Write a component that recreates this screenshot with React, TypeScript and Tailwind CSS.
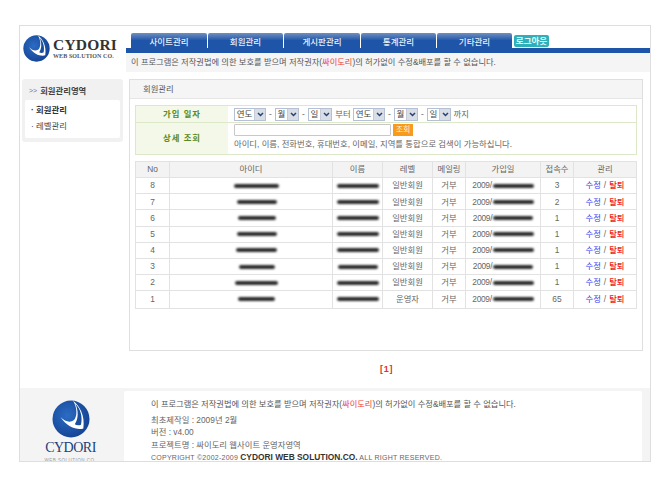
const F = '"Liberation Sans","Noto Sans CJK KR",sans-serif';

function Logo({ size, id }: { size: number; id: string }) {
  return (
    <svg width={size} height={size} viewBox="0 0 40 40" className="shrink-0">
      <defs>
        <radialGradient id={id} cx="0.4" cy="0.4" r="0.7">
          <stop offset="0" stopColor="#2b6cc4" />
          <stop offset="1" stopColor="#123f8e" />
        </radialGradient>
      </defs>
      <circle cx="20" cy="20" r="19.5" fill={`url(#${id})`} />
      <path d="M22 0.500 C29 6 35 16 33 30 C27 32 16 29 9 18 C14 23 20 25 24 20 C27 15 26 7 22 0.500Z" fill="#fff" />
      <path d="M24.500 4 C30 9 32.500 18 30.500 26 C28.500 27 26 27 24 25.500 C28 20 28 11 24.500 4Z" fill="#1a4f9e" />
    </svg>
  );
}

function Sel({ t, w }: { t: string; w: number }) {
  return (
    <span className="inline-flex h-[13px] shrink-0 items-stretch border border-[#b5c0d5] bg-white" style={{ width: w }}>
      <span className="flex-1 text-center text-[8.500px] leading-[11px] text-[#444]">{t}</span>
      <span className="flex w-[11px] items-center justify-center border-l border-[#c5cbd8] bg-[#d9dde6]">
        <svg width="7" height="5" viewBox="0 0 7 5"><path d="M1 1l2.500 2.500L6 1" fill="none" stroke="#27406e" strokeWidth="1.500" /></svg>
      </span>
    </span>
  );
}

const Dash = () => <span className="w-[4px] text-center text-[#666]">-</span>;

function Blur({ w, shift }: { w: number; shift?: boolean }) {
  return <span className={`inline-block h-[4px] rounded-full bg-[#2c2c2c] blur-[1px] ${shift ? 'ml-[11px]' : ''}`} style={{ width: w }} />;
}

const cols = ['w-[33px]', 'w-[163px]', 'w-[50px]', 'w-[50px]', 'w-[33px]', 'w-[75px]', 'w-[33px]', 'flex-1'];

const rows = [
  ['8', 45, 42, '일반회원', 41, '3'],
  ['7', 40, 42, '일반회원', 41, '2'],
  ['6', 38, 42, '일반회원', 40, '1'],
  ['5', 40, 42, '일반회원', 41, '1'],
  ['4', 41, 42, '일반회원', 41, '1'],
  ['3', 36, 40, '일반회원', 40, '1'],
  ['2', 43, 42, '일반회원', 41, '1'],
  ['1', 37, 42, '운영자', 41, '65'],
] as const;

function Cell({ i, children, head }: { i: number; children: React.ReactNode; head?: boolean }) {
  return (
    <div className={`${cols[i]} flex shrink-0 items-center justify-center ${i > 0 ? 'border-l border-[#e2e2e2]' : ''} ${head ? 'bg-[#f3f3f3]' : ''}`}>
      {children}
    </div>
  );
}

const tabs = [
  ['사이트관리', 'w-[76px]'],
  ['회원관리', 'w-[75px]'],
  ['게시판관리', 'w-[76px]'],
  ['통계관리', 'w-[75px]'],
  ['기타관리', 'w-[75px]'],
];

const Notice = () => (
  <span className="text-[8.250px]">이 프로그램은 저작권법에 의한 보호를 받으며 저작권자(<span className="text-[#f03a3a]">싸이도리</span>)의 허가없이 수정&amp;배포를 할 수 없습니다.</span>
);

export default function App() {
  return (
    <div className="h-[477px] w-[670px] overflow-hidden bg-white pl-[19px] pt-[25px] text-[8.350px] text-[#666]" style={{ fontFamily: F }}>
      <div className="flex h-[437px] w-[632px] flex-col overflow-hidden border border-[#dedede]">
        {/* header */}
        <div className="flex h-[47px] shrink-0">
          <div className="flex w-[106px] items-start pl-[3px] pt-[9px]">
            <Logo size={27} id="a" />
            <div className="ml-[3px] mt-[3px] flex flex-col" style={{ fontFamily: '"Liberation Serif",serif' }}>
              <span className="text-[15.500px] font-bold leading-[14px] tracking-[0.2px] text-[#333]">CYDORI</span>
              <span className="text-[6px] font-bold leading-[8px] tracking-[0.1px] text-[#555]">WEB SOLUTION CO.</span>
            </div>
          </div>
          <div className="flex-1">
            <div className="flex h-[22px] items-end pl-[5px] pt-[7px]">
              {tabs.map(([t, w]) => (
                <div key={t} className={`${w} mr-[1px] flex h-[15px] items-center justify-center rounded-t-[2px] bg-gradient-to-b from-[#6f8fc0] via-[#1f55a8] to-[#1f55a8] pt-[3px] text-[8.500px] font-medium text-[#e8f0fa]`}>{t}</div>
              ))}
              <div className="mb-[1px] ml-[1px] flex h-[12px] w-[35px] items-center justify-center rounded-[2px] bg-[#2eb0ba] text-[8.500px] font-bold text-[#e6fbfb]">로그아웃</div>
            </div>
            <div className="h-[5px] bg-[#1f55a8]" />
            <div className="flex h-[19px] items-center bg-[#f5f5f5] pl-[5px] pt-[2px] text-[#555]"><Notice /></div>
          </div>
        </div>
        {/* body */}
        <div className="flex flex-1 pl-[2px] pt-[6px]">
          <div className="h-[63px] w-[101px] shrink-0 rounded-[3px] bg-[#f1f1f1] p-[3px] pt-[3px]">
            <div className="flex h-[18px] items-center pl-[4px] font-bold text-[#444]">
              <span className="mr-[3px] text-[7px] font-normal text-[#777]">&gt;&gt;</span>회원관리영역
            </div>
            <div className="h-[38px] rounded-[2px] bg-white pl-[6px] pt-[2px]">
              <div className="h-[16px] leading-[16px] font-bold text-[#333]">· 회원관리</div>
              <div className="h-[16px] leading-[16px] text-[#444]">· 레벨관리</div>
            </div>
          </div>
          <div className="ml-[6px] h-[272px] w-[514px] shrink-0 border border-[#dfdfdf]">
            <div className="flex h-[19px] items-center border-b border-[#e6e6e6] bg-[#f5f5f5] pl-[13px] text-[#555]">회원관리</div>
            <div className="px-[5px] pt-[6px]">
              <div className="h-[50px] border border-[#dde8c8]">
                <div className="flex h-[17px] border-b border-[#dde8c8]">
                  <div className="flex w-[92px] items-center justify-center bg-[#f3f8e8] font-bold tracking-[1px] text-[#5a8a20]">가입 일자</div>
                  <div className="flex flex-1 items-center gap-[2.500px] pl-[6px]">
                    <Sel t="연도" w={32} /><Dash /><Sel t="월" w={24} /><Dash /><Sel t="일" w={24} />
                    <span className="mr-[-1px] w-[17px] text-center">부터</span>
                    <Sel t="연도" w={32} /><Dash /><Sel t="월" w={24} /><Dash /><Sel t="일" w={24} />
                    <span>까지</span>
                  </div>
                </div>
                <div className="flex h-[31px]">
                  <div className="flex w-[92px] items-center justify-center bg-[#f3f8e8] font-bold tracking-[1px] text-[#5a8a20]">상세 조회</div>
                  <div className="flex-1 pl-[6px] pt-[1px]">
                    <div className="flex items-center">
                      <div className="h-[12px] w-[157px] rounded-[1px] border border-[#c8c8c8] bg-white" />
                      <div className="ml-[2px] flex h-[12px] w-[20px] items-center justify-center bg-[#f89a1c] text-[8px] text-[#fff3da]">조회</div>
                    </div>
                    <div className="mt-[2px] h-[13px] leading-[13px]">아이디, 이름, 전화번호, 휴대번호, 이메일, 지역를 통합으로 검색이 가능하십니다.</div>
                  </div>
                </div>
              </div>
              <div className="mt-[6px] border border-[#e2e2e2]">
                <div className="flex h-[16px] border-b border-[#e2e2e2]">
                  {['No', '아이디', '이름', '레벨', '메일링', '가입일', '접속수', '관리'].map((h, i) => (
                    <Cell key={h} i={i} head>{h}</Cell>
                  ))}
                </div>
                {rows.map((r, idx) => (
                  <div key={r[0]} className={`flex h-[16.200px] ${idx < rows.length - 1 ? 'border-b border-[#e2e2e2]' : ''}`}>
                    <Cell i={0}>{r[0]}</Cell>
                    <Cell i={1}><Blur w={r[1]} shift /></Cell>
                    <Cell i={2}><Blur w={r[2]} /></Cell>
                    <Cell i={3}>{r[3]}</Cell>
                    <Cell i={4}>거부</Cell>
                    <Cell i={5}><span className="mr-[1px] tracking-[-0.3px]">2009/</span><Blur w={r[4]} /></Cell>
                    <Cell i={6}>{r[5]}</Cell>
                    <Cell i={7}><span className="text-[#3a3af0]">수정</span><span className="mx-[3px]">/</span><span className="font-medium text-[#f02020]">탈퇴</span></Cell>
                  </div>
                ))}
              </div>
            </div>
          </div>
        </div>
        {/* pager */}
        <div className="flex h-[37px] shrink-0 items-center pl-[360px] text-[9px] font-bold tracking-[0.8px] text-[#e03030]">[1]</div>
        {/* footer */}
        <div className="flex h-[73px] shrink-0 bg-[#f4f4f4] pt-[3px]">
          <div className="flex w-[104px] shrink-0 flex-col items-center pr-[3px] pt-[9px]">
            <Logo size={38} id="b" />
            <div className="mt-[3px] text-[14px] leading-[14px] tracking-[-0.5px] text-[#1d3f7a]" style={{ fontFamily: '"Liberation Serif",serif' }}>CYDORI</div>
            <div className="mt-[2px] text-[4.500px] leading-[7px] tracking-[0.5px] text-[#999]">WEB SOLUTION CO.</div>
          </div>
          <div className="h-[90px] w-[518px] shrink-0 rounded-[2px] bg-white pl-[27px] pt-[5px]">
            <div className="h-[17.500px] leading-[16px] text-[#555]"><Notice /></div>
            <div className="h-[12.500px] leading-[13px]">최초제작일 : 2009년 2월</div>
            <div className="h-[12.500px] leading-[13px]">버전 : v4.00</div>
            <div className="h-[12.500px] leading-[13px]">프로젝트명 : 싸이도리 웹사이트 운영자영역</div>
            <div className="h-[12.500px] text-[7px] leading-[13px] tracking-[0.25px]">COPYRIGHT ©2002-2009 <b className="text-[8.400px] tracking-normal text-[#333]">CYDORI WEB SOLUTION.CO.</b> ALL RIGHT RESERVED.</div>
          </div>
        </div>
      </div>
    </div>
  );
}
